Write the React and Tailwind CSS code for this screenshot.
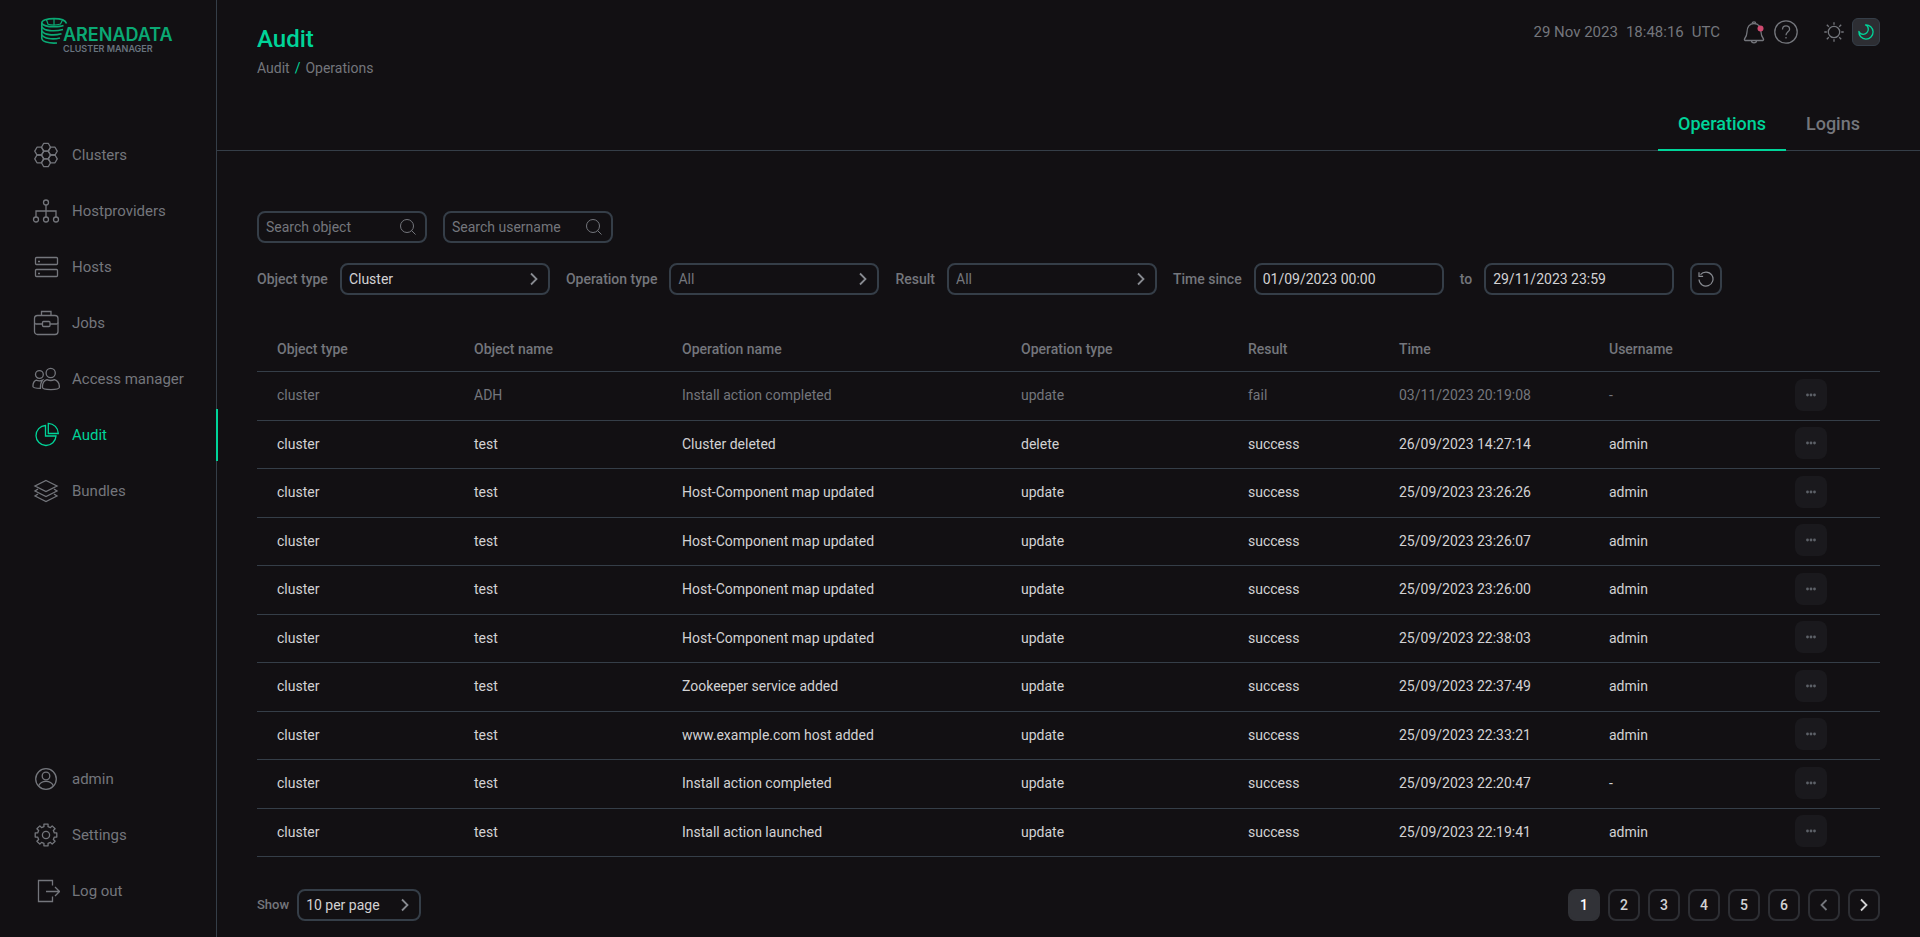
const hexCenters = [
  [14, 14],
  [14, 6.2],
  [14, 21.8],
  [7.25, 10.1],
  [7.25, 17.9],
  [20.75, 10.1],
  [20.75, 17.9],
];

const gearPath = (() => {
  const pts = [];
  const steps = [
    [-0.19, 11],
    [0.19, 11],
    [0.24, 8.6],
    [0.545, 8.6],
  ];
  for (let i = 0; i < 8; i++) {
    for (const [offset, r] of steps) {
      const a = (i * Math.PI) / 4 + offset;
      pts.push(`${(14 + r * Math.sin(a)).toFixed(2)} ${(14 - r * Math.cos(a)).toFixed(2)}`);
    }
  }
  return `M${pts.join('L')}Z`;
})();

const icons = {
  clusters: hexCenters.map(([x, y]) => (
    <path
      key={`${x}-${y}`}
      d={`M${x - 4.5} ${y}l2.25 -3.9h4.5l2.25 3.9l-2.25 3.9h-4.5z`}
      strokeLinejoin="round"
    />
  )),
  hostproviders: (
    <>
      <circle cx="14" cy="5.5" r="2.5" />
      <circle cx="4" cy="22.5" r="2.5" />
      <circle cx="14" cy="22.5" r="2.5" />
      <circle cx="24" cy="22.5" r="2.5" />
      <path d="M14 8v12M4 20v-6h20v6" />
    </>
  ),
  hosts: (
    <>
      <rect x="3.5" y="4.5" width="22" height="7" rx="1" />
      <rect x="3.5" y="16.5" width="22" height="7" rx="1" />
      <path d="M6 8.5h2M6 20.5h2" strokeWidth="1.4" />
    </>
  ),
  jobs: (
    <>
      <rect x="2.5" y="6.5" width="23.5" height="19" rx="3" />
      <path d="M9.5 6.5v-4h9.5v4M2.5 13.5q0 1.5 1.5 1.5h6.5M26 13.5q0 1.5-1.5 1.5h-6.5" />
      <rect x="10.5" y="12.5" width="7.5" height="5" rx="1" />
    </>
  ),
  access: (
    <>
      <circle cx="18.7" cy="8" r="4.6" />
      <circle cx="7.4" cy="9.5" r="3.9" />
      <path d="M15 14.7q3.7 1.6 7.5 0c3.3 1 4.9 3.6 4.9 7.5c0 3.1-17 3.1-17 0c0-3.9 1.4-6.5 4.6-7.5z" />
      <path d="M10.5 15.2q-3.2 1.2-6.3 0c-2.3.8-3.2 3-3.3 6.3q.3 1.7 7.5 1.8c0-3.4.3-5.8 2.1-8.1z" />
    </>
  ),
  audit: (
    <>
      <path d="M13.5 4.5a10 10 0 1 0 10.5 10.5h-10.5z" />
      <path d="M16.3 2.3a10.3 10.3 0 0 1 10 10.2h-10z" />
    </>
  ),
  bundles: (
    <>
      <path d="M14 3.5l11 5.5l-11 5.5l-11 -5.5z" />
      <path d="M6 12l-3 2l11 5.5l11 -5.5l-3 -2" />
      <path d="M6 17l-3 2l11 5.5l11 -5.5l-3 -2" />
    </>
  ),
  user: (
    <>
      <circle cx="14" cy="14" r="10.3" />
      <circle cx="14" cy="11" r="3.8" />
      <path d="M6.6 21q2-4.6 7.4-4.6t7.4 4.6" />
    </>
  ),
  settings: (
    <>
      <path d={gearPath} strokeLinejoin="round" />
      <circle cx="14" cy="14" r="3.6" />
    </>
  ),
  logout: (
    <>
      <path d="M20.5 8.5v-5h-14v21h14v-5" />
      <path d="M14 14.5h13.5M23 10l4.5 4.5l-4.5 4.5" />
    </>
  ),
};

function NavIcon({ name }) {
  return (
    <svg
      className="size-7 shrink-0"
      viewBox="0 0 28 28"
      fill="none"
      stroke="currentColor"
      strokeWidth="1.3"
      aria-hidden="true"
    >
      {icons[name]}
    </svg>
  );
}

function NavItem({ icon, label, active }) {
  return (
    <li>
      <a
        href="#"
        aria-current={active ? 'page' : undefined}
        className={`relative flex h-[52px] items-center gap-3 pl-8 text-[15px] ${
          active ? 'text-[#00d499]' : 'text-[#74767c]'
        }`}
      >
        <NavIcon name={icon} />
        <span>{label}</span>
        {active && <span className="absolute top-0 -right-[2px] h-full w-[2px] bg-[#00d499]" />}
      </a>
    </li>
  );
}

function Logo() {
  return (
    <a href="#" className="flex h-[55px] items-start pt-[17px] pl-10" aria-label="Arenadata Cluster Manager">
      <svg className="-mr-[5px] h-7 w-7 shrink-0" viewBox="0 0 28 28" fill="none" stroke="#0aa974" strokeWidth="1.6">
        <path d="M26.5 6.5C25.5 3.2 20.5 1.6 14 1.6C7 1.6 1.8 3.4 1.8 5.8V21.5C2.2 24.5 8 26.6 17 26" />
        <path d="M1.8 6C2.4 8.4 8 10 14 9.8C18 9.7 21.5 9.3 23.5 8.5" />
        <path d="M2 9.8C4 13.8 14 15 23 12.5M2 13.8C4 17.8 13 19 21.5 16.7M2 17.8C4 21.5 12 23 20 21" />
        <path d="M6.5 2.8L8 7.2Q14 9 20.5 7L22.5 3M14 1.6V7.8" strokeWidth="1.2" />
      </svg>
      <span className="flex flex-col pt-[9px]">
        <span className="font-[Inter] text-[18px] leading-[18px] font-semibold text-[#0aa974]">ARENADATA</span>
        <span className="font-[Inter] text-[9px] leading-[10px] font-semibold text-[#68737e]">
          CLUSTER MANAGER
        </span>
      </span>
    </a>
  );
}

function Chevron({ className, flip }) {
  return (
    <svg className={className} viewBox="0 0 16 16" fill="none" stroke="currentColor" strokeWidth="1.8" aria-hidden="true">
      <path d={flip ? 'M10.5 3L5.5 8l5 5' : 'M5 2.5L10.5 8l-5.5 5.5'} />
    </svg>
  );
}

function SearchField({ label }) {
  return (
    <div className="flex h-8 w-[170px] items-center rounded-lg border-2 border-[#353e48] pr-[9px] pl-[7px]">
      <input
        type="text"
        aria-label={label}
        placeholder={label}
        className="min-w-0 flex-1 bg-transparent text-sm text-[#d2d2d3] outline-none placeholder:text-[#74767c]"
      />
      <svg className="size-4 shrink-0 text-[#74767c]" viewBox="0 0 16 16" fill="none" stroke="currentColor" aria-hidden="true">
        <circle cx="7" cy="7" r="6.5" />
        <path d="M11.5 11.5l4 4" />
      </svg>
    </div>
  );
}

function SelectBox({ id, value, className, muted }) {
  return (
    <div className={`relative ${className}`}>
      <select
        id={id}
        className={`h-8 w-full appearance-none rounded-lg border-2 border-[#353e48] bg-transparent pr-8 pl-[7px] text-sm outline-none ${
          muted ? 'text-[#74767c]' : 'text-[#d2d2d3]'
        }`}
      >
        <option>{value}</option>
      </select>
      <Chevron className="pointer-events-none absolute top-2 right-2 size-4 text-[#888b91]" />
    </div>
  );
}

const labelClass = 'text-sm font-medium text-[#74767c]';

function FilterSelect({ id, label, value, muted }) {
  return (
    <div className="flex items-center gap-3">
      <label htmlFor={id} className={labelClass}>
        {label}
      </label>
      <SelectBox id={id} value={value} muted={muted} className="w-[210px]" />
    </div>
  );
}

function DateField({ id, label, value }) {
  return (
    <div className="flex items-center gap-3">
      <label htmlFor={id} className={labelClass}>
        {label}
      </label>
      <input
        id={id}
        type="text"
        defaultValue={value}
        className="h-8 w-[190px] rounded-lg border-2 border-[#353e48] bg-transparent px-[7px] text-sm text-[#d2d2d3] outline-none"
      />
    </div>
  );
}

const columns = ['Object type', 'Object name', 'Operation name', 'Operation type', 'Result', 'Time', 'Username'];

const rows = [
  ['cluster', 'ADH', 'Install action completed', 'update', 'fail', '03/11/2023 20:19:08', '-'],
  ['cluster', 'test', 'Cluster deleted', 'delete', 'success', '26/09/2023 14:27:14', 'admin'],
  ['cluster', 'test', 'Host-Component map updated', 'update', 'success', '25/09/2023 23:26:26', 'admin'],
  ['cluster', 'test', 'Host-Component map updated', 'update', 'success', '25/09/2023 23:26:07', 'admin'],
  ['cluster', 'test', 'Host-Component map updated', 'update', 'success', '25/09/2023 23:26:00', 'admin'],
  ['cluster', 'test', 'Host-Component map updated', 'update', 'success', '25/09/2023 22:38:03', 'admin'],
  ['cluster', 'test', 'Zookeeper service added', 'update', 'success', '25/09/2023 22:37:49', 'admin'],
  ['cluster', 'test', 'www.example.com host added', 'update', 'success', '25/09/2023 22:33:21', 'admin'],
  ['cluster', 'test', 'Install action completed', 'update', 'success', '25/09/2023 22:20:47', '-'],
  ['cluster', 'test', 'Install action launched', 'update', 'success', '25/09/2023 22:19:41', 'admin'],
];

function OperationsTable() {
  return (
    <table className="mt-[30px] w-full table-fixed border-separate border-spacing-0 text-left text-sm">
      <colgroup>
        <col className="w-[197px]" />
        <col className="w-[208px]" />
        <col className="w-[339px]" />
        <col className="w-[227px]" />
        <col className="w-[151px]" />
        <col className="w-[210px]" />
        <col className="w-[186px]" />
        <col className="w-[105px]" />
      </colgroup>
      <thead>
        <tr className="h-[47px] text-[#74767c]">
          {columns.map((c) => (
            <th key={c} scope="col" className="border-b border-[#353e48] pt-[2px] pl-5 font-medium">
              {c}
            </th>
          ))}
          <th className="border-b border-[#353e48]" aria-label="Actions" />
        </tr>
      </thead>
      <tbody>
        {rows.map((row) => (
          <tr
            key={row[5]}
            className={`odd:h-[49px] even:h-[48px] ${row[4] === 'fail' ? 'text-[#74767c]' : 'text-[#d2d2d3]'}`}
          >
            {row.map((cell, i) => (
              <td key={columns[i]} className="border-b border-[#353e48] pb-[2px] pl-5">
                {cell}
              </td>
            ))}
            <td className="border-b border-[#353e48] pb-[3px] pl-5">
              <button
                type="button"
                aria-label="Show details"
                className="flex size-8 items-center justify-center rounded-lg bg-[#1a191d] text-[#5d6168]"
              >
                <svg className="h-1 w-[10px]" viewBox="0 0 10 4" fill="currentColor" aria-hidden="true">
                  <circle cx="1.5" cy="2" r="1.4" />
                  <circle cx="5" cy="2" r="1.4" />
                  <circle cx="8.5" cy="2" r="1.4" />
                </svg>
              </button>
            </td>
          </tr>
        ))}
      </tbody>
    </table>
  );
}

function TopBar() {
  return (
    <div className="flex items-center text-[#74767c]">
      <div className="flex gap-2 text-[15px]">
        <span>29 Nov 2023</span>
        <span>18:48:16</span>
        <span>UTC</span>
      </div>
      <button type="button" aria-label="Notifications" className="ml-[22px]">
        <svg className="size-6" viewBox="0 0 24 24" fill="none" stroke="currentColor" strokeWidth="1.3">
          <path d="M5 12C5 7 7.5 3.5 12 3.5S19 7 19 12C19 15 20 17 21.5 19C22 20 21 20.5 20 20.5H4C3 20.5 2 20 2.5 19C4 17 5 15 5 12Z" />
          <path d="M10.3 3.5a1.7 1.7 0 0 1 3.4 0M9.5 20.8a2.5 2 0 0 0 5 0" />
          <circle cx="18.5" cy="8.5" r="3" fill="#d04a70" stroke="none" />
        </svg>
      </button>
      <button type="button" aria-label="Help" className="ml-2">
        <svg className="size-6" viewBox="0 0 24 24" fill="none" stroke="currentColor" strokeWidth="1.3">
          <circle cx="12" cy="12" r="11.2" />
          <path d="M8.5 9.5C8.5 7 10 5.9 12 5.9S15.6 7.1 15.6 9.2C15.6 11.8 12 12 12 15.2" />
          <path d="M12 17v1.5" />
        </svg>
      </button>
      <button type="button" aria-label="Light theme" className="ml-[22px] flex size-7 items-center justify-center">
        <svg className="size-5" viewBox="0 0 20 20" fill="none" stroke="currentColor" strokeWidth="1.3">
          <circle cx="10" cy="10" r="5.7" />
          <path d="M10 .3v2.500M10 17.2v2.500M.3 10h2.500M17.2 10h2.500M2.800 2.800l2 2M15.200 15.200l2 2M2.800 17.200l2-2M15.200 4.800l2-2" />
        </svg>
      </button>
      <button
        type="button"
        aria-label="Dark theme"
        className="ml-1 flex size-7 items-center justify-center rounded-md border border-[#353e48] bg-[#2d2e33] text-[#00d499]"
      >
        <svg className="size-4" viewBox="0 0 16 16" fill="none" stroke="currentColor" strokeWidth="1.3" strokeLinejoin="round">
          <path d="M7.5 .9A7.100 7.100 0 1 1 .9 7.500C1.500 9.100 3 10.300 5.200 10.300A5.100 5.100 0 0 0 10.300 5.200C10.300 3 9.100 1.500 7.500 .9Z" />
        </svg>
      </button>
    </div>
  );
}

const pageButton = 'flex size-8 items-center justify-center rounded-lg border-2 text-sm font-medium';

export default function App() {
  return (
    <div className="flex min-h-screen bg-[#121013] font-[Roboto,sans-serif] text-[#d2d2d3]">
      <aside className="flex w-[217px] shrink-0 flex-col border-r border-[#353e48] pb-5">
        <Logo />
        <nav className="mt-[74px] flex flex-1 flex-col justify-between" aria-label="Main">
          <ul className="flex flex-col gap-1">
            <NavItem icon="clusters" label="Clusters" />
            <NavItem icon="hostproviders" label="Hostproviders" />
            <NavItem icon="hosts" label="Hosts" />
            <NavItem icon="jobs" label="Jobs" />
            <NavItem icon="access" label="Access manager" />
            <NavItem icon="audit" label="Audit" active />
            <NavItem icon="bundles" label="Bundles" />
          </ul>
          <ul className="flex flex-col gap-1">
            <NavItem icon="user" label="admin" />
            <NavItem icon="settings" label="Settings" />
            <NavItem icon="logout" label="Log out" />
          </ul>
        </nav>
      </aside>

      <div className="flex min-w-0 flex-1 flex-col">
        <header className="flex h-[151px] flex-col justify-between border-b border-[#353e48] px-10 pt-[18px]">
          <div className="flex items-start justify-between">
            <div className="pt-[5px]">
              <h1 className="text-2xl font-medium text-[#00d499]">Audit</h1>
              <nav className="mt-[3px] flex gap-[5px] text-sm text-[#74767c]" aria-label="Breadcrumb">
                <a href="#">Audit</a>
                <span className="text-[#00d499]">/</span>
                <span>Operations</span>
              </nav>
            </div>
            <TopBar />
          </div>
          <nav className="-mb-px flex justify-end text-lg font-medium" aria-label="Audit sections">
            <a href="#" aria-current="page" className="border-b-2 border-[#00d499] px-5 pb-[11px] text-[#00d499]">
              Operations
            </a>
            <a href="#" className="border-b-2 border-transparent px-5 pb-[11px] text-[#74767c]">
              Logins
            </a>
          </nav>
        </header>

        <main className="px-10 pt-[60px] pb-4">
          <div className="flex flex-wrap gap-4">
            <SearchField label="Search object" />
            <SearchField label="Search username" />
          </div>
          <div className="mt-5 flex flex-wrap items-center gap-4">
            <FilterSelect id="object-type" label="Object type" value="Cluster" />
            <FilterSelect id="operation-type" label="Operation type" value="All" muted />
            <FilterSelect id="result" label="Result" value="All" muted />
            <DateField id="time-from" label="Time since" value="01/09/2023 00:00" />
            <DateField id="time-to" label="to" value="29/11/2023 23:59" />
            <button
              type="button"
              aria-label="Reset filters"
              className="flex size-8 items-center justify-center rounded-lg border-2 border-[#353e48] text-[#888b91]"
            >
              <svg className="size-4" viewBox="0 0 16 16" fill="none" stroke="currentColor" strokeWidth="1.2" aria-hidden="true">
                <path d="M1 8.5A7 7 0 1 0 2.5 3.7" />
                <path d="M1 1.2v4.1h4.1" />
              </svg>
            </button>
          </div>

          <OperationsTable />

          <div className="mt-8 flex items-center justify-between">
            <div className="flex items-center gap-2">
              <label htmlFor="per-page" className="text-[13px] font-medium text-[#74767c]">
                Show
              </label>
              <SelectBox id="per-page" value="10 per page" className="w-[124px]" />
            </div>
            <nav className="flex gap-2" aria-label="Pagination">
              <button type="button" aria-current="page" className={`${pageButton} border-[#313237] bg-[#313237] text-white`}>
                1
              </button>
              {[2, 3, 4, 5, 6].map((n) => (
                <button key={n} type="button" className={`${pageButton} border-[#2d2e33]`}>
                  {n}
                </button>
              ))}
              <button type="button" aria-label="Previous page" className={`${pageButton} border-[#2d2e33] text-[#74767c]`}>
                <Chevron className="size-4" flip />
              </button>
              <button type="button" aria-label="Next page" className={`${pageButton} border-[#2d2e33]`}>
                <Chevron className="size-4" />
              </button>
            </nav>
          </div>
        </main>
      </div>
    </div>
  );
}
